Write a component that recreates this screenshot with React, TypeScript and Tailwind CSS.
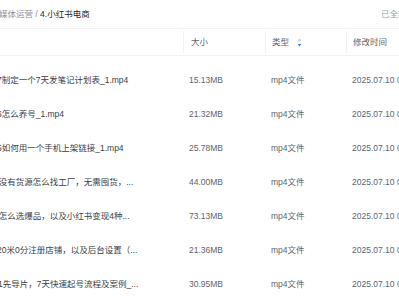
import React from "react";

const rows = [
  { name: "7制定一个7天发笔记计划表_1.mp4", off: "-ml-[3px]", size: "15.13MB" },
  { name: "6怎么养号_1.mp4", off: "-ml-[3px]", size: "21.32MB" },
  { name: "5如何用一个手机上架链接_1.mp4", off: "-ml-[3px]", size: "25.78MB" },
  { name: "4没有货源怎么找工厂，无需囤货，...", off: "-ml-[6px]", size: "44.00MB" },
  { name: "3怎么选爆品，以及小红书变现4种...", off: "-ml-[6px]", size: "73.13MB" },
  { name: "20米0分注册店铺，以及后台设置（...", off: "-ml-[3px]", size: "21.36MB" },
  { name: "1先导片，7天快速起号流程及案例_...", off: "-ml-[2px]", size: "30.95MB" },
];

export default function App() {
  return (
    <div
      className="w-[399px] h-[300px] overflow-hidden bg-white text-[8.5px] leading-normal"
      style={{ fontFamily: '"Liberation Sans", "Noto Sans CJK SC", sans-serif' }}
    >
      <div className="h-[28px] flex items-center justify-between">
        <div className="-ml-[1px] whitespace-nowrap">
          <span className="text-[#8b9099]">媒体运营 / </span>
          <span className="text-[#1f2329]">4.小红书电商</span>
        </div>
        <div className="w-[18px] overflow-hidden whitespace-nowrap text-[#9a9ea6]">已全部加载</div>
      </div>
      <div className="grid grid-cols-[183px_82px_81px_1fr] h-[28px] border-y border-[#f1f2f4] text-[#5f636b]">
        <div className="h-full" />
        <div className="flex items-center pl-[7px] border-l border-[#f0f1f3] my-[2px]">大小</div>
        <div className="flex items-center pl-[6px] border-l border-[#f0f1f3] my-[2px] gap-[8px]">
          <span>类型</span>
          <svg width="5" height="9" viewBox="0 0 5 9">
            <path d="M2.5 0.5 L4.5 3 L0.5 3 Z" fill="#c9ccd2" />
            <path d="M2.5 8.5 L4.5 6 L0.5 6 Z" fill="#2f7df6" />
          </svg>
        </div>
        <div className="flex items-center pl-[6px] border-l border-[#f0f1f3] my-[2px] whitespace-nowrap">修改时间</div>
      </div>
      <div className="pt-[7px]">
        {rows.map((r, i) => (
          <div key={i} className="grid grid-cols-[183px_82px_81px_1fr] h-[34px] items-center">
            <div className="overflow-hidden whitespace-nowrap text-[#3b3e44] py-[2px]">
              <span className={`inline-block ${r.off}`}>{r.name}</span>
            </div>
            <div className="pl-[6px] text-[#60646c]">{r.size}</div>
            <div className="pl-[6px] text-[#60646c]">mp4文件</div>
            <div className="pl-[6px] text-[#60646c] whitespace-nowrap overflow-hidden">2025.07.10 09:32</div>
          </div>
        ))}
      </div>
    </div>
  );
}
